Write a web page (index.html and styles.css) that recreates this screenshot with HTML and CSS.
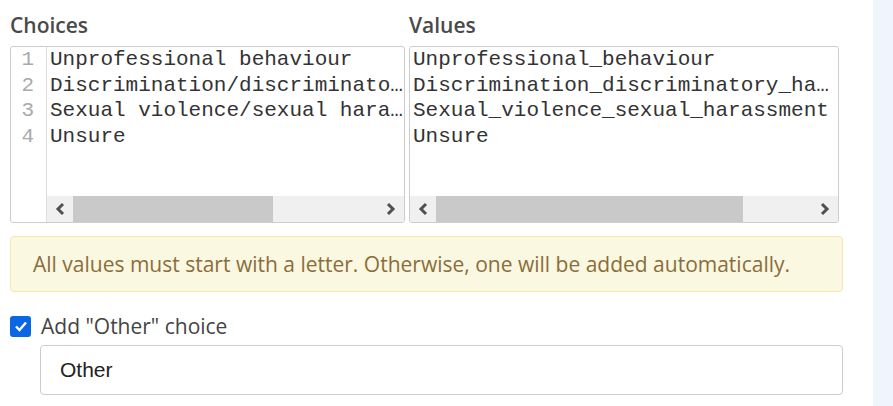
FILE: index.html
```html
<!DOCTYPE html>
<html lang="en">
<head>
  <meta charset="UTF-8">
  <title>Choices</title>
  <link rel="stylesheet" href="styles.css">
</head>
<body>
  <div class="page">
    <div class="editor">
      <div class="columns">
        <div class="col col-choices">
          <p class="heading">Choices</p>
          <div class="box">
            <div class="gutter">
              <span>1</span>
              <span>2</span>
              <span>3</span>
              <span>4</span>
            </div>
            <div class="code">
              <div class="lines">
                <div class="line">Unprofessional behaviour</div>
                <div class="line">Discrimination/discriminato…</div>
                <div class="line">Sexual violence/sexual hara…</div>
                <div class="line">Unsure</div>
              </div>
              <div class="hscroll">
                <span class="arrow">
                  <svg width="12" height="14" viewBox="0 0 12 14"><path d="M9 2 L4 7 L9 12" fill="none" stroke="#505050" stroke-width="3"/></svg>
                </span>
                <span class="thumb thumb-choices"></span>
                <span class="track"></span>
                <span class="arrow">
                  <svg width="12" height="14" viewBox="0 0 12 14"><path d="M3 2 L8 7 L3 12" fill="none" stroke="#505050" stroke-width="3"/></svg>
                </span>
              </div>
            </div>
          </div>
        </div>
        <div class="col col-values">
          <p class="heading">Values</p>
          <div class="box">
            <div class="code">
              <div class="lines">
                <div class="line">Unprofessional_behaviour</div>
                <div class="line">Discrimination_discriminatory_ha…</div>
                <div class="line">Sexual_violence_sexual_harassment</div>
                <div class="line">Unsure</div>
              </div>
              <div class="hscroll">
                <span class="arrow">
                  <svg width="12" height="14" viewBox="0 0 12 14"><path d="M9 2 L4 7 L9 12" fill="none" stroke="#505050" stroke-width="3"/></svg>
                </span>
                <span class="thumb thumb-values"></span>
                <span class="track"></span>
                <span class="arrow">
                  <svg width="12" height="14" viewBox="0 0 12 14"><path d="M3 2 L8 7 L3 12" fill="none" stroke="#505050" stroke-width="3"/></svg>
                </span>
              </div>
            </div>
          </div>
        </div>
      </div>

      <div class="warning">All values must start with a letter. Otherwise, one will be added automatically.</div>

      <label class="check">
        <span class="checkbox">
          <svg width="14" height="12" viewBox="0 0 14 12"><path d="M2 6.5 L5.5 10 L12 2.5" fill="none" stroke="#fff" stroke-width="2.4"/></svg>
        </span>
        Add "Other" choice
      </label>

      <div class="other-input">Other</div>
    </div>
    <div class="side"></div>
  </div>
</body>
</html>
```

FILE: styles.css
```css
* {
  box-sizing: border-box;
}

body {
  margin: 0;
  background-color: #fff;
  font-family: "Open Sans", sans-serif;
  color: #444;
}

.page {
  display: flex;
  height: 406px;
}

.editor {
  width: 873px;
  padding: 12px 0 0 10px;
}

.columns {
  display: flex;
  gap: 4px;
}

.col-choices {
  width: 395px;
}

.col-values {
  width: 430px;
}

.heading {
  margin: 0 0 8px;
  font-size: 21px;
  line-height: 26px;
  font-weight: 600;
  color: #4a4a4a;
}

.box {
  display: flex;
  height: 177px;
  border: 1px solid #ccc;
  border-radius: 3px;
  overflow: hidden;
  font-family: "Liberation Mono", monospace;
  font-size: 21px;
}

.gutter {
  display: flex;
  flex-direction: column;
  width: 36px;
  padding-right: 12px;
  border-right: 1px solid #ddd;
  text-align: right;
  color: #aaa;

  span {
    line-height: 25.5px;
  }
}

.code {
  flex: 1;
  min-width: 0;
  display: flex;
  flex-direction: column;
}

.lines {
  flex: 1;
  padding-left: 3px;
  padding-right: 1px;
  color: #333;
}

.line {
  line-height: 25.5px;
  white-space: nowrap;
}

.hscroll {
  display: flex;
  height: 26px;
  background-color: #f0f0f0;

  .arrow {
    display: flex;
    align-items: center;
    justify-content: center;
    width: 26px;
  }

  .thumb {
    background-color: #c9c9c9;
  }

  .track {
    flex: 1;
  }
}

.thumb-choices {
  width: 200px;
}

.thumb-values {
  width: 307px;
}

.warning {
  width: 833px;
  margin-top: 13px;
  padding: 0 22px;
  height: 56px;
  line-height: 54px;
  font-size: 21px;
  color: #8a6d3b;
  background-color: #fbf8e1;
  border: 1px solid #f5e7b1;
  border-radius: 4px;
}

.check {
  display: flex;
  align-items: center;
  gap: 10px;
  margin-top: 23px;
  font-size: 21px;
  line-height: 22px;
  color: #444;
}

.checkbox {
  display: flex;
  align-items: center;
  justify-content: center;
  width: 21px;
  height: 21px;
  border-radius: 3px;
  background-color: #0b66e4;
}

.other-input {
  width: 803px;
  height: 50px;
  margin: 8px 0 0 30px;
  padding: 0 19px;
  line-height: 48px;
  font-family: "Liberation Sans", Arial, sans-serif;
  font-size: 21px;
  color: #222;
  border: 1px solid #ccc;
  border-radius: 4px;
}

.side {
  width: 20px;
  background-color: #f0f4fd;
}
```
